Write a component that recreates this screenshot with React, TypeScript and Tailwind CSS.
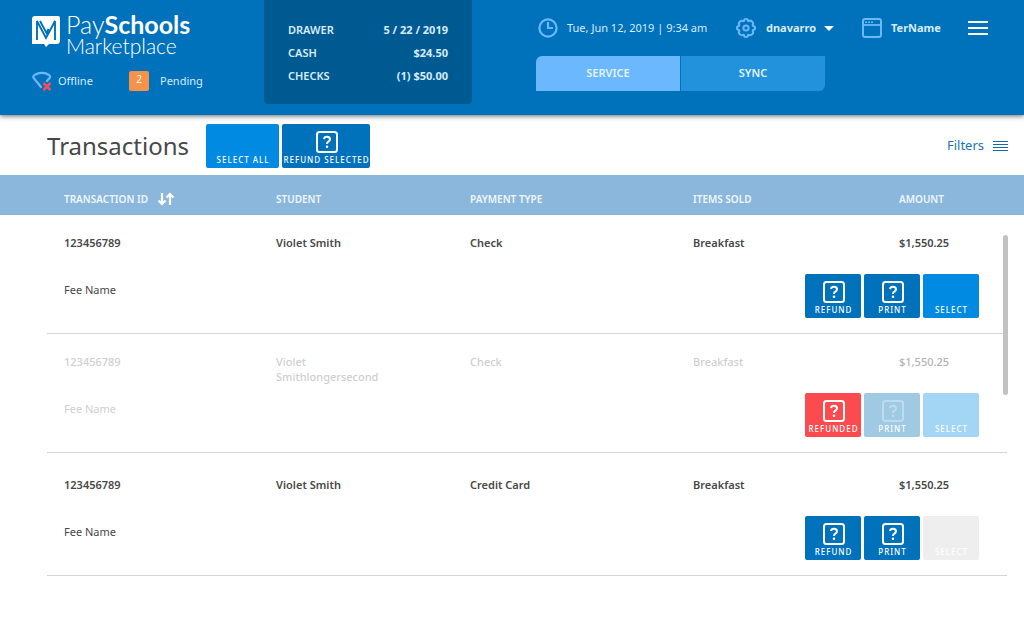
import { useState } from 'react';
import clsx from 'clsx';

interface Transaction {
  id: string;
  student: string;
  paymentType: string;
  item: string;
  amount: string;
  fee: string;
  refunded?: boolean;
  locked?: boolean;
}

const transactions: Transaction[] = [
  {
    id: '123456789',
    student: 'Violet Smith',
    paymentType: 'Check',
    item: 'Breakfast',
    amount: '$1,550.25',
    fee: 'Fee Name',
  },
  {
    id: '123456789',
    student: 'Violet Smithlongersecond',
    paymentType: 'Check',
    item: 'Breakfast',
    amount: '$1,550.25',
    fee: 'Fee Name',
    refunded: true,
  },
  {
    id: '123456789',
    student: 'Violet Smith',
    paymentType: 'Credit Card',
    item: 'Breakfast',
    amount: '$1,550.25',
    fee: 'Fee Name',
    locked: true,
  },
];

const drawer = [
  { label: 'DRAWER', value: '5 / 22 / 2019' },
  { label: 'CASH', value: '$24.50' },
  { label: 'CHECKS', value: '(1) $50.00' },
];

const LogoMark = () => (
  <svg width="29" height="32" viewBox="0 0 29 32" className="mt-0.5" aria-hidden="true">
    <path d="M3 0H26Q28 0 28 2V24Q28 28 25 28H17L14 31L12 28H0V3Q0 0 3 0Z" fill="#fff" />
    <path
      d="M5 24V5L14 22L23 5V24M8 5L14.500 17L16.500 13"
      fill="none"
      stroke="#0072bc"
      strokeWidth="1.900"
    />
  </svg>
);

const OfflineIcon = () => (
  <svg width="20" height="20" viewBox="0 0 20 20" fill="none" aria-hidden="true">
    <path
      d="M9 16L1.700 7C0.900 6 1.200 5 2.500 4C7 1.200 13 1.200 17 4C18.300 5 18.400 5.800 17.700 6.700L15 10"
      stroke="#6bb8ff"
      strokeWidth="2.200"
      strokeLinecap="round"
    />
    <path d="M11.500 12L18.500 19M18.500 12L11.500 19" stroke="#f94d55" strokeWidth="2.500" />
  </svg>
);

const ClockIcon = () => (
  <svg width="20" height="20" viewBox="0 0 20 20" fill="none" stroke="#6bb8ff" strokeWidth="2.200" aria-hidden="true">
    <circle cx="10" cy="10" r="8.600" />
    <path d="M10 4V10H15" />
  </svg>
);

const GearIcon = () => (
  <svg width="20" height="20" viewBox="0 0 20 20" fill="none" stroke="#6bb8ff" strokeWidth="2" aria-hidden="true">
    <path
      d="M8 3Q8 1 10 1T12 3L12.700 3.300Q14.500 1.900 16 3.600Q17.900 5.300 16.600 7L17 8Q19 8 19 10T17 12L16.600 13Q17.900 14.700 16.200 16.200Q14.700 17.900 13 16.700L12 17Q12 19 10 19T8 17L7 16.700Q5.300 17.900 3.800 16.200Q2.100 14.700 3.400 13L3 12Q1 12 1 10T3 8L3.400 7Q2.100 5.300 3.800 3.800Q5.300 2.100 7 3.300Z"
      strokeLinejoin="round"
    />
    <circle cx="10" cy="10" r="2.600" />
  </svg>
);

const WindowIcon = () => (
  <svg width="20" height="20" viewBox="0 0 20 20" fill="none" stroke="#6bb8ff" aria-hidden="true">
    <rect x="1" y="1" width="18" height="18" rx="2" strokeWidth="2" />
    <path d="M1 7H19" strokeWidth="1.800" />
    <path d="M3 4.300H12" strokeWidth="1.500" strokeDasharray="2 1" />
  </svg>
);

const SortIcon = () => (
  <svg width="18" height="14" viewBox="0 0 18 14" fill="none" stroke="#fff" strokeWidth="2.200" aria-hidden="true">
    <path d="M5 1V12M1.500 8.500L5 12L8.500 8.500M13 13V2M9.500 5.500L13 2L16.500 5.500" />
  </svg>
);

const QuestionIcon = () => (
  <svg width="22" height="22" viewBox="0 0 22 22" fill="none" stroke="currentColor" aria-hidden="true">
    <rect x="1" y="1" width="20" height="20" rx="2.500" strokeWidth="2" />
    <path d="M8 8Q8.300 5.800 11 5.800Q14 5.800 14 8.300Q14 9.700 12.400 10.700Q11 11.500 11 13" strokeWidth="2" />
    <circle cx="11" cy="15.700" r="0.700" strokeWidth="1.200" />
  </svg>
);

interface TileProps {
  label: string;
  className: string;
  icon?: boolean;
  iconClass?: string;
  disabled?: boolean;
}

const Tile = ({ label, className, icon, iconClass, disabled }: TileProps) => (
  <button
    type="button"
    disabled={disabled}
    className={clsx(
      'flex h-11 flex-col items-center justify-end rounded-xs pb-px pl-px text-[8px] leading-[14px] font-medium tracking-[1px] whitespace-nowrap text-white',
      className
    )}
  >
    {icon && (
      <span className={iconClass}>
        <QuestionIcon />
      </span>
    )}
    {label}
  </button>
);

const Header = () => {
  const [tab, setTab] = useState('SERVICE');

  return (
    <header className="relative flex h-[115px] bg-[#0072bc] text-[#d6ecfb] shadow-[0_1px_5px_rgba(0,0,0,0.6)]">
      <div className="w-[264px] shrink-0 pt-[14px] pl-8">
        <div className="flex gap-[5px] text-white">
          <LogoMark />
          <div className="font-['Lato'] font-light">
            <div className="text-[25px] leading-[21px]">
              Pay<span className="font-bold">Schools</span>
            </div>
            <div className="text-[21px] leading-[21px]">Marketplace</div>
          </div>
        </div>
        <div className="mt-[15px] flex items-center text-[11px]">
          <OfflineIcon />
          <span className="ml-[6px] w-[71px]">Offline</span>
          <span className="h-5 w-5 rounded-xs bg-[#f7924a] text-center text-[10px] leading-[16px] text-white">2</span>
          <span className="ml-[11px]">Pending</span>
        </div>
      </div>

      <dl className="h-[104px] w-[208px] shrink-0 rounded-b bg-[#005a92] px-6 pt-[18px] text-[11px] leading-[23px] font-semibold">
        {drawer.map((row) => (
          <div key={row.label} className="flex justify-between">
            <dt>{row.label}</dt>
            <dd className="font-bold">{row.value}</dd>
          </div>
        ))}
      </dl>

      <div className="ml-16 flex-1 pt-4 pr-9">
        <div className="flex h-6 items-center text-[11px]">
          <div className="ml-0.5 flex w-[198px] items-center gap-[9px] whitespace-nowrap">
            <ClockIcon />
            <span>Tue, Jun 12, 2019 | 9:34 am</span>
          </div>
          <button type="button" className="flex w-[126px] items-center gap-[10px] font-bold">
            <GearIcon />
            <span>dnavarro</span>
            <svg width="10" height="5" viewBox="0 0 10 5" className="-ml-0.5 fill-white" aria-hidden="true">
              <path d="M0 0H10L5 5Z" />
            </svg>
          </button>
          <div className="flex items-center gap-[9px] font-bold">
            <WindowIcon />
            <span>TerName</span>
          </div>
          <button type="button" aria-label="Menu" className="ml-auto">
            <svg width="20" height="16" viewBox="0 0 20 16" stroke="#fff" strokeWidth="2" aria-hidden="true">
              <path d="M0 2H20M0 8H20M0 14H20" />
            </svg>
          </button>
        </div>
        <div className="mt-4 flex gap-px text-[11px] font-semibold text-[#e3f2fd]">
          <button
            type="button"
            onClick={() => setTab('SERVICE')}
            className={clsx('h-[35px] w-36 rounded-tl-md', tab === 'SERVICE' ? 'bg-[#6bb8ff]' : 'bg-[#2292dc]')}
          >
            SERVICE
          </button>
          <button
            type="button"
            onClick={() => setTab('SYNC')}
            className={clsx('h-[35px] w-36 rounded-br-md', tab === 'SYNC' ? 'bg-[#6bb8ff]' : 'bg-[#2292dc]')}
          >
            SYNC
          </button>
        </div>
      </div>
    </header>
  );
};

const TransactionRows = ({ item }: { item: Transaction }) => (
  <tbody className={item.refunded ? 'text-[#cfcfcf]' : 'text-[#484848]'}>
    <tr
      className={clsx(
        'align-top leading-[15px]',
        item.refunded ? 'font-medium' : 'font-semibold',
        item.locked ? 'h-[63px] [&>td]:pt-6' : 'h-[59px] [&>td]:pt-5'
      )}
    >
      <td className="pl-16">{item.id}</td>
      <td className="pr-16">{item.student}</td>
      <td>{item.paymentType}</td>
      <td>{item.item}</td>
      <td className={item.refunded ? 'text-[#b4b4b4]' : ''}>{item.amount}</td>
    </tr>
    <tr>
      <td colSpan={5}>
        <div className="mr-[17px] ml-[47px] flex justify-between border-b border-[#d4d4d4] pr-7 pb-[15px] pl-[17px]">
          <span className="pt-2 leading-[15px]">{item.fee}</span>
          <div className="flex gap-[3px]">
            <Tile
              label={item.refunded ? 'REFUNDED' : 'REFUND'}
              icon
              disabled={item.refunded}
              className={clsx('w-14', item.refunded ? 'bg-[#fb4b4f]' : 'bg-[#0072bc]')}
            />
            <Tile
              label="PRINT"
              icon
              iconClass={item.refunded ? 'text-[#bcdcf0]' : ''}
              disabled={item.refunded}
              className={clsx('w-14', item.refunded ? 'bg-[#a0c9e4]' : 'bg-[#0072bc]')}
            />
            <Tile
              label="SELECT"
              disabled={item.refunded || item.locked}
              className={clsx(
                'w-14',
                item.refunded && 'bg-[#a3d5f4]',
                item.locked && 'bg-[#eeeeee]',
                !item.refunded && !item.locked && 'bg-[#008ae2]'
              )}
            />
          </div>
        </div>
      </td>
    </tr>
  </tbody>
);

const App = () => {
  return (
    <div className="min-h-screen bg-white font-['Noto_Sans','Open_Sans',sans-serif] text-[#484848]">
      <Header />

      <main>
        <div className="flex h-[60px] items-center pt-0.5 pr-4 pl-[47px]">
          <h1 className="mr-[17px] text-[24px]">Transactions</h1>
          <div className="flex gap-[3px]">
            <Tile label="SELECT ALL" className="w-[73px] bg-[#008ae2]" />
            <Tile label="REFUND SELECTED" icon className="w-[88px] bg-[#0072bc]" />
          </div>
          <button type="button" className="ml-auto flex items-center gap-[9px] text-[13px] text-[#1a75ad]">
            Filters
            <svg width="15" height="12" viewBox="0 0 15 12" stroke="#0e6ca8" aria-hidden="true">
              <path d="M0 1.500H15M0 4.500H15M0 7.500H15M0 10.500H15" />
            </svg>
          </button>
        </div>

        <div className="relative">
          <table className="w-full table-fixed text-left text-[11px]">
            <thead className="bg-[#8cb7dc] text-[10px] text-[#eef6fc]">
              <tr className="h-10 [&>th]:pt-2 [&>th]:font-semibold">
                <th className="w-[276px] pl-16">
                  <button type="button" className="flex items-center gap-[9px]">
                    TRANSACTION ID
                    <SortIcon />
                  </button>
                </th>
                <th className="w-[194px]">STUDENT</th>
                <th className="w-[223px]">PAYMENT TYPE</th>
                <th className="w-[206px]">ITEMS SOLD</th>
                <th className="w-[125px]">AMOUNT</th>
              </tr>
            </thead>
            {transactions.map((item, index) => (
              <TransactionRows key={index} item={item} />
            ))}
          </table>
          {/* scroll thumb */}
          <div className="absolute top-[60px] right-4 h-40 w-[5px] rounded-full bg-[#c2c2c2]" />
        </div>
      </main>
    </div>
  );
};

export default App;
